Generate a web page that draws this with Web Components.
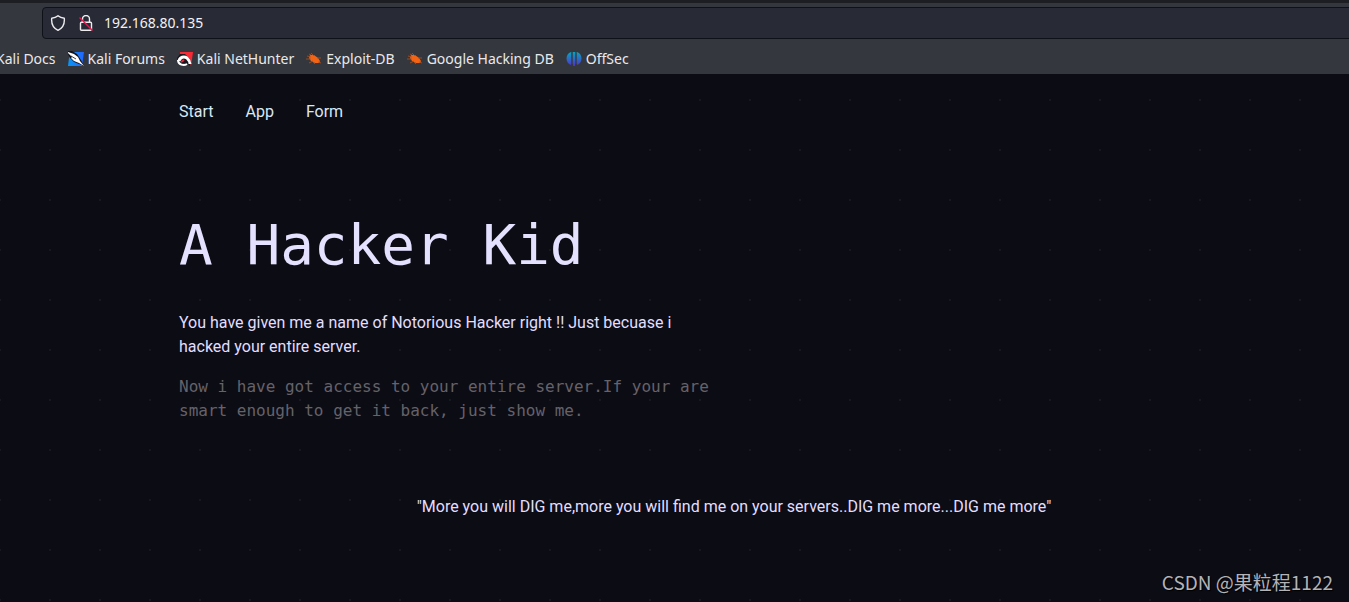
<!DOCTYPE html>
<html lang="en">
<head>
<meta charset="utf-8">
<title>A Hacker Kid</title>
<style>
html, body { margin: 0; min-height: 100%; background: #0c0c15; }
body { overflow-x: hidden; }
</style>
</head>
<body>
<hacker-window></hacker-window>
<script>
const icons = {
  forums: '<defs><linearGradient id="f" x2="1"><stop stop-color="#0797f5"/><stop offset="1" stop-color="#2365ff"/></linearGradient></defs><path fill="url(#f)" d="M4 1H16L14 15H0l1-8z"/><path fill="#10131c" d="M0 0h4l5 3 4 6 3 6-5-2-5-2-4-4-2-4z"/><path fill="#fff" d="M0 1l6 2 4 3 2 4 4 5-5-3-5-2-3-3 1-1-4-4z"/><path stroke="#10131c" stroke-width=".8" d="M3 5l5 3"/>',
  nethunter: '<path fill="#f62a35" d="M3 1h13l-2 14-3-6-3-3-5-2z"/><path fill="#171820" d="M0 7l3-4h5l4 4 2 4-1 4-3-3H2l-2-2z"/><path fill="none" stroke="#fff" stroke-width="3" d="M2 10c1-4 5-5 8-3 2 2 3 3 3 6"/><path fill="none" stroke="#fff" stroke-width="2" d="M1 9c0 5 6 6 9 4"/><path stroke="#ed2636" stroke-width="2" d="M4 11l3-2"/>',
  exploit: '<path fill="#f26314" d="M4 4h4l4 3 2 3-1 2H9l-4-2-2-3z"/><path fill="none" stroke="#b0501e" stroke-width=".8" d="M1 5l4 1M0 8h5M3 12l4-2M7 11l2 2M8 5L5 2M11 7h4M12 11l3 1M5 4L3 3"/>',
  offsec: '<defs><linearGradient id="o" gradientUnits="userSpaceOnUse" x1="0" y1="1" x2="0" y2="15"><stop stop-color="#08a4bf"/><stop offset="1" stop-color="#5132ca"/></linearGradient></defs><path fill="url(#o)" d="M5 1v13C-1 12-1 3 5 1M11 1v13c6-2 6-11 0-13"/><path fill="url(#o)" d="M7 1h2v14H7z"/><path fill="url(#o)" opacity=".3" d="M5 1h2v12H5zM9 1h2v12H9z"/>'
};

function define(name, html) {
  const template = document.createElement('template');
  template.innerHTML = html;
  customElements.define(name, class extends HTMLElement {
    constructor() {
      super();
      this.attachShadow({ mode: 'open' }).append(template.content.cloneNode(true));
    }
  });
}

customElements.define('book-mark', class extends HTMLElement {
  connectedCallback() {
    if (this.shadowRoot) return;
    const art = icons[this.getAttribute('icon')];
    this.attachShadow({ mode: 'open' }).innerHTML = `
      <style>
        :host { display: block; flex: none; }
        a { display: flex; align-items: center; gap: 4px; color: #e9e9ec; text-decoration: none; line-height: 24px; white-space: nowrap; }
        svg { width: 16px; height: 16px; flex: none; }
      </style>
      <a href="#">${art ? `<svg viewBox="0 0 16 16" aria-hidden="true">${art}</svg>` : ''}<slot></slot></a>`;
  }
});

define('address-bar', `
  <style>
    :host { display: block; padding: 4px 0 4px 42px; }
    form { display: flex; align-items: center; box-sizing: border-box; height: 32px; margin: 0 -4px 0 0; padding: 0 7px; gap: 12px; background: #282a36; border: 1px solid #0e1117; border-radius: 4px; }
    svg { width: 16px; height: 16px; flex: none; fill: none; stroke: #ededf0; stroke-width: 1.4; stroke-linejoin: round; }
    input { flex: 1; min-width: 0; margin: 0 0 0 -2px; padding: 0; border: 0; outline: 0; background: none; color: #f2f2f5; font: inherit; line-height: 24px; }
  </style>
  <form>
    <svg viewBox="0 0 16 16" aria-hidden="true"><path d="M8 .8c2 1.8 4 2.3 6.3 2.5.5 5.5-1.7 9.8-6.3 12C3.4 13.1 1.2 8.8 1.7 3.3 4 3.1 6 2.6 8 .8z"/></svg>
    <svg viewBox="0 0 16 16" aria-hidden="true"><path d="M4.5 7V4a3.5 3.5 0 0 1 7 0v3M3.5 7.200h9q1 0 1 1v6q0 1-1 1h-9q-1 0-1-1v-6q0-1 1-1z"/><path stroke="#e3174d" d="M1.5 2.500l13 13"/></svg>
    <input type="text" aria-label="Address" value="192.168.80.135">
  </form>`);

define('browser-chrome', `
  <style>
    :host { display: block; overflow: hidden; background: #34373d; border-top: 3px solid #1c1e23; font: 14px "Noto Sans", sans-serif; }
    nav { display: flex; align-items: center; gap: 12px; height: 31px; margin-left: -4px; }
  </style>
  <address-bar></address-bar>
  <nav aria-label="Bookmarks">
    <book-mark>Kali Docs</book-mark>
    <book-mark icon="forums">Kali Forums</book-mark>
    <book-mark icon="nethunter">Kali NetHunter</book-mark>
    <book-mark icon="exploit">Exploit-DB</book-mark>
    <book-mark icon="exploit">Google Hacking DB</book-mark>
    <book-mark icon="offsec">OffSec</book-mark>
  </nav>`);

define('site-nav', `
  <style>
    :host { display: block; padding: 26px 0 24px; }
    nav { display: flex; gap: 32px; }
    a { color: #d9e8f5; text-decoration: none; }
  </style>
  <nav><a href="#">Start</a><a href="#">App</a><a href="#">Form</a></nav>`);

define('hero-copy', `
  <style>
    :host { display: block; max-width: 540px; padding-top: 63px; }
    h1 { margin: 0 0 32px; font: 56px/68px "DejaVu Sans Mono", monospace; color: #e4e1ff; white-space: nowrap; }
    p { margin: 0 0 16px; }
    .dim { font-family: "DejaVu Sans Mono", monospace; color: #656269; }
  </style>
  <h1>A Hacker Kid</h1>
  <p>You have given me a name of Notorious Hacker right !! Just becuase i hacked your entire server.</p>
  <p class="dim">Now i have got access to your entire server.If your are smart enough to get it back, just show me.</p>`);

define('dig-quote', `
  <style>
    :host { display: block; padding-top: 56px; text-align: center; }
    p { margin: 0; }
  </style>
  <p>"More you will DIG me,more you will find me on your servers..DIG me more...DIG me more"</p>`);

define('site-page', `
  <style>
    :host { display: block; flex: 1; padding: 0 60px 0 179px; color: #e1dfff; font: 16px/24px Roboto, sans-serif;
      background: conic-gradient(from 90deg at 48px 48px, #171720 25%, transparent 0) 1px -23px / 50px 50px #0c0c15; }
  </style>
  <site-nav></site-nav>
  <hero-copy></hero-copy>
  <dig-quote></dig-quote>`);

define('author-mark', `
  <style>
    :host { display: block; position: absolute; right: 16px; bottom: 6px; color: #b4b4b7; font: 19px/28px "Noto Sans CJK SC", sans-serif; text-shadow: 1px 1px 1px #000; white-space: nowrap; }
  </style>
  <span lang="zh">CSDN @果粒程1122</span>`);

define('hacker-window', `
  <style>
    :host { display: flex; flex-direction: column; position: relative; min-height: 100vh; }
  </style>
  <browser-chrome></browser-chrome>
  <site-page></site-page>
  <author-mark></author-mark>`);
</script>
</body>
</html>
